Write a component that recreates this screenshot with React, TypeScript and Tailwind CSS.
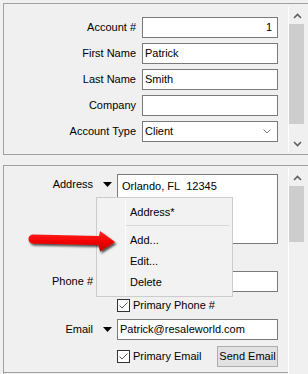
import React from "react";

function Chevron({ up }: { up?: boolean }) {
  return (
    <svg width="9" height="6" viewBox="0 0 9 6">
      <path
        d={up ? "M1 5 L4.5 1.5 L8 5" : "M1 1 L4.5 4.5 L8 1"}
        fill="none"
        stroke="#606060"
        strokeWidth="1.6"
      />
    </svg>
  );
}

function DropTri() {
  return (
    <svg width="9" height="5" viewBox="0 0 9 5">
      <polygon points="0,0 9,0 4.5,5" fill="#000" />
    </svg>
  );
}

function Check() {
  return (
    <div className="w-[13px] h-[13px] border border-[#333333] bg-white flex items-center justify-center shrink-0">
      <svg width="11" height="11" viewBox="0 0 11 11">
        <path d="M1.5 5.5 L4 8 L9.5 2.5" fill="none" stroke="#555555" strokeWidth="1" />
      </svg>
    </div>
  );
}

function Field({ children, right }: { children?: React.ReactNode; right?: boolean }) {
  return (
    <div
      className={
        "h-[21px] border border-[#7a7a7a] bg-white flex items-center px-[2px] " +
        (right ? "justify-end pr-[5px]" : "")
      }
    >
      {children}
    </div>
  );
}

export default function App() {
  const topRows: [string, React.ReactNode][] = [
    ["Account #", <Field right>1</Field>],
    ["First Name", <Field>Patrick</Field>],
    ["Last Name", <Field>Smith</Field>],
    ["Company", <Field />],
    [
      "Account Type",
      <div className="h-[21px] border border-[#7a7a7a] bg-white flex items-center px-[2px] justify-between pr-[6px]">
        <span>Client</span>
        <svg width="8" height="5" viewBox="0 0 8 5">
          <path d="M0.5 0.5 L4 4 L7.5 0.5" fill="none" stroke="#7a7a7a" strokeWidth="1" />
        </svg>
      </div>,
    ],
  ];

  return (
    <div className="relative w-[308px] h-[374px] overflow-hidden bg-[#f0f0f0] text-black text-[11px] leading-none font-['Liberation_Sans',Arial,sans-serif]">
      {/* Panel 1 */}
      <div className="mt-[3px] ml-[3px] h-[152px] border-t border-b border-l border-[#a0a0a0] flex">
        <div className="flex-1 pt-[13px] pl-0">
          <div className="grid grid-cols-[132px_136px] gap-x-[6px] gap-y-[5px]">
            {topRows.map(([label, field]) => (
              <React.Fragment key={label}>
                <div className="h-[21px] flex items-center justify-end">{label}</div>
                {field}
              </React.Fragment>
            ))}
          </div>
        </div>
        <div className="w-[17px] mt-[3px] h-[145px] border-l border-white flex flex-col">
          <div className="h-[17px] flex items-center justify-center">
            <Chevron up />
          </div>
          <div className="h-[100px] w-[15px] bg-[#cdcdcd]" />
          <div className="flex-1" />
          <div className="h-[17px] flex items-center justify-center">
            <Chevron />
          </div>
        </div>
        <div className="w-[3px]" />
      </div>

      {/* Panel 2 */}
      <div className="mt-[10px] ml-[3px] h-[209px] border-t border-l border-[#a0a0a0] flex">
        <div className="flex-1 h-[207px] border-b border-[#a0a0a0] pt-[8px] flex flex-col">
          <div className="flex items-start">
            <div className="w-[89px] h-[21px] flex items-center justify-end">Address</div>
            <div className="w-[24px] h-[21px] flex items-center justify-end pr-[5px]">
              <DropTri />
            </div>
            <div className="w-[161px] h-[70px] border border-[#7a7a7a] bg-white px-[4px] pt-[6px]">
              Orlando, FL&nbsp;&nbsp;12345
            </div>
          </div>
          <div className="mt-[27px] flex items-center">
            <div className="w-[89px] h-[21px] flex items-center justify-end">Phone #</div>
            <div className="w-[24px]" />
            <div className="w-[161px]">
              <Field />
            </div>
          </div>
          <div className="mt-[7px] flex items-center h-[13px]">
            <div className="w-[113px]" />
            <div className="flex items-center gap-[3px]">
              <Check />
              <span>Primary Phone #</span>
            </div>
          </div>
          <div className="mt-[7px] flex items-center">
            <div className="w-[89px] h-[21px] flex items-center justify-end">Email</div>
            <div className="w-[24px] h-[21px] flex items-center justify-end pr-[5px]">
              <DropTri />
            </div>
            <div className="w-[161px]">
              <Field>Patrick@resaleworld.com</Field>
            </div>
          </div>
          <div className="mt-[6px] flex items-center h-[21px]">
            <div className="w-[113px]" />
            <div className="w-[161px] flex items-center">
              <div className="flex items-center gap-[3px]">
                <Check />
                <span>Primary Email</span>
              </div>
              <div className="ml-auto w-[61px] h-[21px] border border-[#adadad] bg-[#e1e1e1] flex items-center justify-center">
                Send Email
              </div>
            </div>
          </div>
        </div>
        <div className="w-[17px] mt-[2px] pt-[1px] border-l border-white flex flex-col">
          <div className="h-[17px] flex items-center justify-center">
            <Chevron up />
          </div>
          <div className="h-[56px] w-[15px] bg-[#cdcdcd]" />
        </div>
        <div className="w-[3px]" />
      </div>

      {/* Context menu */}
      <div className="absolute left-[96px] top-[197px] w-[137px] h-[100px] border border-[#cccccc] bg-[#f2f2f2] pt-[3px]">
        <div className="absolute left-[28px] top-0 bottom-0 w-px bg-[#fbfbfb]" />
        <div className="h-[22px] flex items-center pl-[33px]">Address*</div>
        <div className="h-[7px] pt-[2px] pl-[29px] pr-[3px]">
          <div className="h-px bg-[#d7d7d7]" />
        </div>
        <div className="h-[21px] flex items-center pl-[33px]">Add...</div>
        <div className="h-[21px] flex items-center pl-[33px]">Edit...</div>
        <div className="h-[21px] flex items-center pl-[33px]">Delete</div>
      </div>

      {/* Red arrow */}
      <svg className="absolute left-[25px] top-[222px]" width="100" height="36" viewBox="0 0 100 36">
        <defs>
          <linearGradient id="rg" x1="0" y1="0" x2="0" y2="1">
            <stop offset="0" stopColor="#ff2a2a" />
            <stop offset="0.5" stopColor="#f40000" />
            <stop offset="1" stopColor="#c00000" />
          </linearGradient>
          <filter id="sh" x="-20%" y="-30%" width="140%" height="170%">
            <feDropShadow dx="1.5" dy="2" stdDeviation="1.2" floodColor="#000" floodOpacity="0.7" />
          </filter>
        </defs>
        <path
          d="M8 12.5 L74 14 L75 9 L90 20 L75 29.5 L73.5 23 L8 21.5 A4.5 4.5 0 0 1 8 12.5 Z"
          fill="url(#rg)"
          filter="url(#sh)"
        />
      </svg>
    </div>
  );
}
